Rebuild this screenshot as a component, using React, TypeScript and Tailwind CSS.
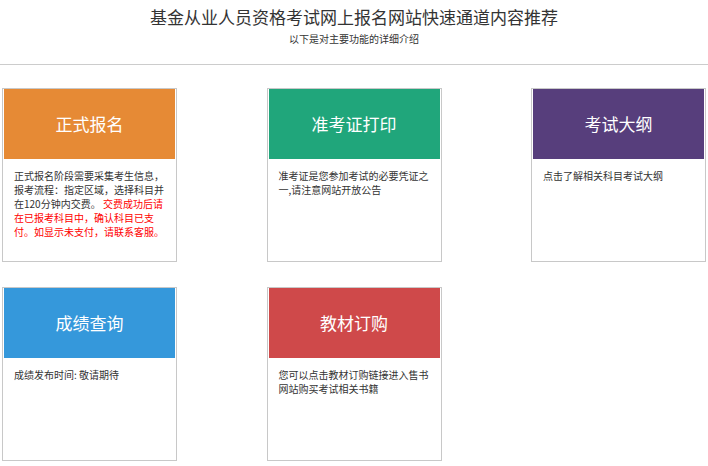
import React from "react";

type Card = {
  title: string;
  color: string;
  body: React.ReactNode;
};

const cards: Card[] = [
  {
    title: "正式报名",
    color: "bg-[#e68a35]",
    body: (
      <>
        正式报名阶段需要采集考生信息，报考流程：指定区域，选择科目并在120分钟内交费。{" "}
        <span className="text-[#ff0000]">交费成功后请在已报考科目中，确认科目已支付。如显示未支付，请联系客服。</span>
      </>
    ),
  },
  {
    title: "准考证打印",
    color: "bg-[#20a67b]",
    body: "准考证是您参加考试的必要凭证之一,请注意网站开放公告",
  },
  {
    title: "考试大纲",
    color: "bg-[#573e7c]",
    body: "点击了解相关科目考试大纲",
  },
  {
    title: "成绩查询",
    color: "bg-[#3598db]",
    body: "成绩发布时间: 敬请期待",
  },
  {
    title: "教材订购",
    color: "bg-[#cf494a]",
    body: "您可以点击教材订购链接进入售书网站购买考试相关书籍",
  },
];

const font = "font-['Noto_Sans_CJK_SC','Noto_Sans',sans-serif]";

export default function App() {
  return (
    <div className={`w-full bg-white text-[#333] ${font}`}>
      <header className="pt-[7px] pb-[18px] text-center border-b border-[#cccccc]">
        <h1 className="text-[17px] leading-[20px]">基金从业人员资格考试网上报名网站快速通道内容推荐</h1>
        <p className="mt-[5px] text-[10px] leading-[14px]">以下是对主要功能的详细介绍</p>
      </header>

      <div className="mt-[23px] px-[2px] grid grid-cols-[175px_175px_175px] justify-between gap-y-[25px]">
        {cards.map((c) => (
          <div key={c.title} className="h-[174px] border border-[#c8c8c8] px-px flex flex-col">
            <div className={`${c.color} h-[70px] flex items-center justify-center text-white text-[17px]`}>
              {c.title}
            </div>
            <div className="px-[10px] pt-[10px] text-[10px] leading-[14px] text-[#333]">{c.body}</div>
          </div>
        ))}
      </div>
    </div>
  );
}
